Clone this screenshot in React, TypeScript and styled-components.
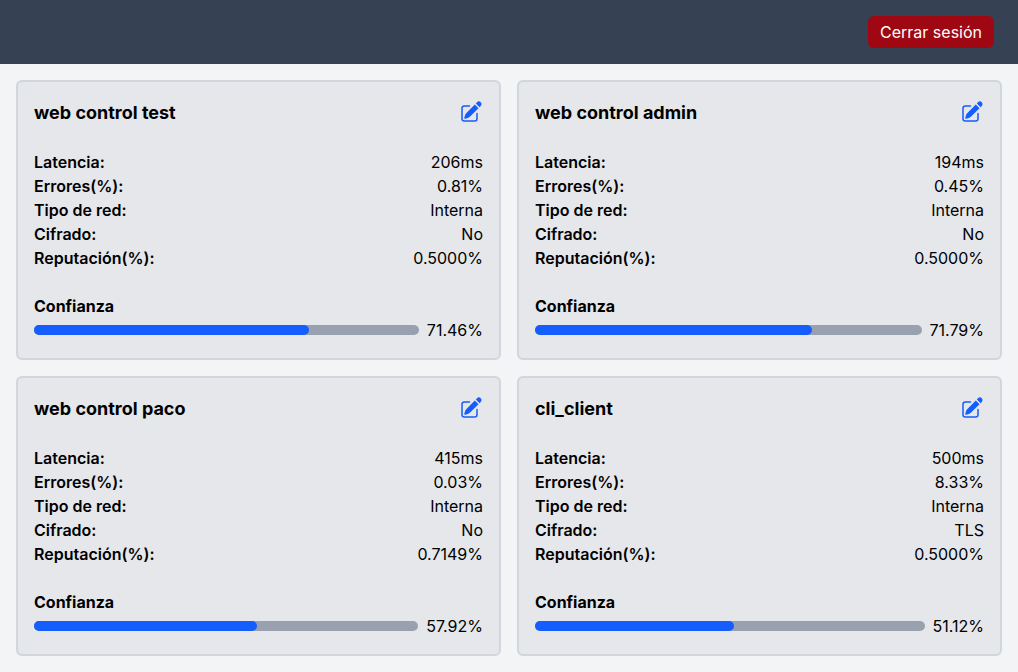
import React from 'react';
import styled, { createGlobalStyle } from 'styled-components';

const GlobalStyle = createGlobalStyle`
  *, *::before, *::after { box-sizing: border-box; }
  body {
    margin: 0;
    background: #f3f4f6;
    color: #000;
    font-family: Inter, sans-serif;
    font-size: 16px;
    line-height: 24px;
  }
`;

const Header = styled.header`
  display: flex;
  align-items: center;
  justify-content: flex-end;
  height: 64px;
  padding: 0 24px;
  background: #364153;
`;

const LogoutButton = styled.button`
  padding: 4px 12px;
  border: 0;
  border-radius: 6px;
  background: #9f0712;
  color: #fff;
  font: inherit;
  cursor: pointer;
`;

const CardGrid = styled.main`
  display: grid;
  grid-template-columns: repeat(2, minmax(0, 1fr));
  gap: 16px;
  padding: 16px;
`;

const Card = styled.article`
  padding: 16px;
  border: 2px solid #d1d5dc;
  border-radius: 6px;
  background: #e5e7eb;
`;

const CardHeader = styled.div`
  display: flex;
  align-items: flex-start;
  justify-content: space-between;
  margin-bottom: 22px;
`;

const CardTitle = styled.h2`
  margin: 0;
  font-size: 18px;
  line-height: 30px;
  font-weight: 700;
`;

const EditButton = styled.button`
  display: flex;
  padding: 2px 0;
  border: 0;
  background: none;
  color: #155dfc;
  cursor: pointer;
`;

const Metrics = styled.dl`
  margin: 0 0 24px;
`;

const Metric = styled.div`
  display: flex;
  justify-content: space-between;
`;

const MetricName = styled.dt`
  font-weight: 600;
`;

const MetricValue = styled.dd`
  margin: 0;
`;

const TrustTitle = styled.h3`
  margin: 0;
  font-size: 16px;
  line-height: 24px;
  font-weight: 700;
`;

const TrustRow = styled.div`
  display: flex;
  align-items: center;
  gap: 8px;
`;

const Track = styled.div`
  flex: 1;
  height: 10px;
  border-radius: 5px;
  background: #99a1af;
`;

const Fill = styled.div`
  height: 100%;
  border-radius: 5px;
  background: #155dfc;
`;

const EditIcon = () => (
  <svg width="24" height="24" viewBox="0 0 24 24" fill="currentColor" aria-hidden="true">
    <path d="M21.731 2.269a2.625 2.625 0 0 0-3.712 0l-1.157 1.157 3.712 3.712 1.157-1.157a2.625 2.625 0 0 0 0-3.712ZM19.513 8.199l-3.712-3.712-8.4 8.4a5.25 5.25 0 0 0-1.32 2.214l-.8 2.685a.75.75 0 0 0 .933.933l2.685-.8a5.25 5.25 0 0 0 2.214-1.32l8.4-8.4Z" />
    <path d="M5.25 5.25a3 3 0 0 0-3 3v10.5a3 3 0 0 0 3 3h10.5a3 3 0 0 0 3-3V13.5a.75.75 0 0 0-1.5 0v5.25a1.5 1.5 0 0 1-1.5 1.5H5.25a1.5 1.5 0 0 1-1.5-1.5V8.25a1.5 1.5 0 0 1 1.5-1.5h5.25a.75.75 0 0 0 0-1.5H5.25Z" />
  </svg>
);

interface Client {
  name: string;
  latency: string;
  errors: string;
  network: string;
  encryption: string;
  reputation: string;
  trust: number;
}

const clients: Client[] = [
  { name: 'web control test', latency: '206ms', errors: '0.81%', network: 'Interna', encryption: 'No', reputation: '0.5000%', trust: 71.46 },
  { name: 'web control admin', latency: '194ms', errors: '0.45%', network: 'Interna', encryption: 'No', reputation: '0.5000%', trust: 71.79 },
  { name: 'web control paco', latency: '415ms', errors: '0.03%', network: 'Interna', encryption: 'No', reputation: '0.7149%', trust: 57.92 },
  { name: 'cli_client', latency: '500ms', errors: '8.33%', network: 'Interna', encryption: 'TLS', reputation: '0.5000%', trust: 51.12 },
];

const ClientCard = ({ client }: { client: Client }) => {
  const metrics = [
    ['Latencia:', client.latency],
    ['Errores(%):', client.errors],
    ['Tipo de red:', client.network],
    ['Cifrado:', client.encryption],
    ['Reputación(%):', client.reputation],
  ];
  return (
    <Card>
      <CardHeader>
        <CardTitle>{client.name}</CardTitle>
        <EditButton type="button" aria-label={`Editar ${client.name}`}>
          <EditIcon />
        </EditButton>
      </CardHeader>
      <Metrics>
        {metrics.map(([name, value]) => (
          <Metric key={name}>
            <MetricName>{name}</MetricName>
            <MetricValue>{value}</MetricValue>
          </Metric>
        ))}
      </Metrics>
      <TrustTitle>Confianza</TrustTitle>
      <TrustRow>
        <Track>
          <Fill style={{ width: `${client.trust}%` }} />
        </Track>
        <span>{client.trust.toFixed(2)}%</span>
      </TrustRow>
    </Card>
  );
};

export default function App() {
  return (
    <>
      <GlobalStyle />
      <Header>
        <LogoutButton type="button">Cerrar sesión</LogoutButton>
      </Header>
      <CardGrid>
        {clients.map((client) => (
          <ClientCard key={client.name} client={client} />
        ))}
      </CardGrid>
    </>
  );
}
